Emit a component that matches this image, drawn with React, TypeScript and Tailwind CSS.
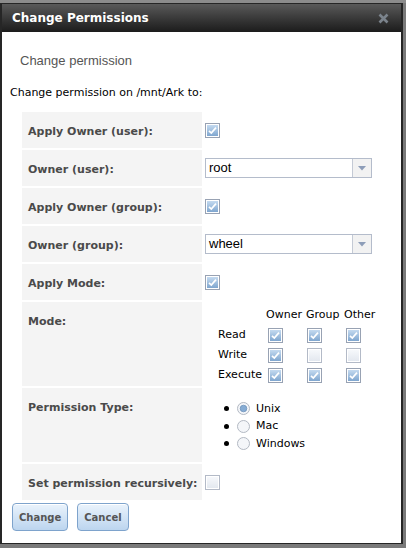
import React from 'react'

const verdana = { fontFamily: '"DejaVu Sans", Verdana, sans-serif' }
const arial = { fontFamily: '"Liberation Sans", Arial, sans-serif' }

function Check({ on = true }: { on?: boolean }) {
  return (
    <svg width="15" height="15" viewBox="0 0 15 15" className="block">
      <defs>
        <linearGradient id="cbOn" x1="0" y1="0" x2="0" y2="1">
          <stop offset="0" stopColor="#c4daf0" />
          <stop offset="1" stopColor="#7fa6cf" />
        </linearGradient>
        <linearGradient id="cbOff" x1="0" y1="0" x2="0" y2="1">
          <stop offset="0" stopColor="#f6f8fb" />
          <stop offset="1" stopColor="#e3e8ef" />
        </linearGradient>
      </defs>
      <rect x="0.5" y="0.5" width="14" height="14" fill="#fff" stroke={on ? '#98a2b3' : '#b3bac7'} />
      <rect x="2" y="2" width="11" height="11" fill={on ? 'url(#cbOn)' : 'url(#cbOff)'} />
      {on && <path d="M4 7.8 L6.3 10 L11 4.6" fill="none" stroke="#fff" strokeWidth="1.7" />}
    </svg>
  )
}

function Radio({ on = false }: { on?: boolean }) {
  return (
    <svg width="13" height="13" viewBox="0 0 13 13" className="block">
      <circle cx="6.5" cy="6.5" r="6" fill="#f4f6f9" stroke="#b2b8c2" />
      {on && <circle cx="6.5" cy="6.5" r="3.3" fill="#86acd4" stroke="#6f93bb" strokeWidth="0.8" />}
    </svg>
  )
}

function Select({ value }: { value: string }) {
  return (
    <div className="flex h-[20px] w-[167px] border border-[#b4bccb] bg-white">
      <div className="flex-1 pl-[3px] text-[13px] leading-[18px] text-black" style={arial}>
        {value}
      </div>
      <div className="flex w-[19px] items-center justify-center border-l border-[#c4cad5] bg-[#f2f2f2]">
        <svg width="8" height="5" viewBox="0 0 8 5">
          <path d="M0 0 H8 L4 4.5 Z" fill="#8d9db8" />
        </svg>
      </div>
    </div>
  )
}

function Row({ label, children, h = 'h-[36px]', top = false }: { label: string; children: React.ReactNode; h?: string; top?: boolean }) {
  return (
    <div className={`flex ${h}`}>
      <div
        className="w-[180px] shrink-0 bg-[#f4f4f4] pl-[6px] pt-[12px] text-[11px] font-bold leading-[15px] text-[#4a4a4a]"
        style={verdana}
      >
        {label}
      </div>
      <div className={`flex pl-[3px] ${top ? 'items-start' : 'items-center'}`}>{children}</div>
    </div>
  )
}

export default function App() {
  const modes: [string, boolean[]][] = [
    ['Read', [true, true, true]],
    ['Write', [true, false, false]],
    ['Execute', [true, true, true]],
  ]
  return (
    <div className="relative h-[548px] w-[406px] overflow-hidden bg-[#7a7a7a]">
      <div className="h-[3px] bg-[#8c8c8c]" />
      <div className="flex h-[541px] w-[403px] flex-col border-y border-l-[2px] border-r-[2px] border-[#262626] bg-white">
        <div className="flex h-[28px] shrink-0 items-center justify-between bg-gradient-to-b from-[#5a5a5a] to-[#1c1c1c] pl-[10px] pr-[12px]">
          <span className="text-[12px] font-bold text-white" style={verdana}>
            Change Permissions
          </span>
          <svg width="11" height="11" viewBox="0 0 11 11">
            <path d="M1.5 1.5 L9.5 9.5 M9.5 1.5 L1.5 9.5" stroke="#7b838c" strokeWidth="2.6" />
          </svg>
        </div>

        <div className="pl-[18px] pt-[21px] text-[13px] leading-[16px] text-[#555]" style={arial}>
          Change permission
        </div>
        <div className="pl-[8px] pt-[16px] text-[11px] leading-[15px] text-black" style={verdana}>
          Change permission on /mnt/Ark to:
        </div>

        <div className="ml-[20px] mt-[12px] flex flex-col gap-[2px]">
          <Row label="Apply Owner (user):">
            <Check />
          </Row>
          <Row label="Owner (user):">
            <Select value="root" />
          </Row>
          <Row label="Apply Owner (group):">
            <Check />
          </Row>
          <Row label="Owner (group):">
            <Select value="wheel" />
          </Row>
          <Row label="Apply Mode:">
            <Check />
          </Row>
          <Row label="Mode:" h="h-[84px]" top>
            <div className="ml-[13px] mt-[6px] text-[11px] leading-[14px] text-black" style={verdana}>
              <div className="flex">
                <span className="w-[48px]" />
                <span className="w-[40px]">Owner</span>
                <span className="w-[38px]">Group</span>
                <span>Other</span>
              </div>
              {modes.map(([name, vals]) => (
                <div key={name} className="mt-[6px] flex h-[14px] items-center">
                  <span className="w-[50px]">{name}</span>
                  {vals.map((v, i) => (
                    <span key={i} className={i === 2 ? '' : 'w-[39px]'}>
                      <Check on={v} />
                    </span>
                  ))}
                </div>
              ))}
            </div>
          </Row>
          <Row label="Permission Type:" h="h-[74px]" top>
            <div className="ml-[19px] mt-[12px] flex flex-col text-[11px] leading-[14px] text-black" style={verdana}>
              {[['Unix', true], ['Mac', false], ['Windows', false]].map(([n, on]) => (
                <div key={n as string} className="flex h-[17.5px] items-center">
                  <span className="mr-[8px] h-[5px] w-[5px] rounded-full bg-black" />
                  <Radio on={on as boolean} />
                  <span className="ml-[6px]">{n as string}</span>
                </div>
              ))}
            </div>
          </Row>
          <Row label="Set permission recursively:">
            <Check on={false} />
          </Row>
        </div>

        <div className="ml-[10px] mt-[3px] flex gap-[9px]">
          {['Change', 'Cancel'].map((b) => (
            <button
              key={b}
              className="h-[28px] rounded-[4px] border border-[#7ea3cc] bg-gradient-to-b from-[#eaf3fc] to-[#bcd5ef] px-[6px] text-[10px] font-bold text-[#555] shadow-[inset_0_1px_0_#fff]"
              style={verdana}
            >
              {b}
            </button>
          ))}
        </div>
      </div>
    </div>
  )
}
